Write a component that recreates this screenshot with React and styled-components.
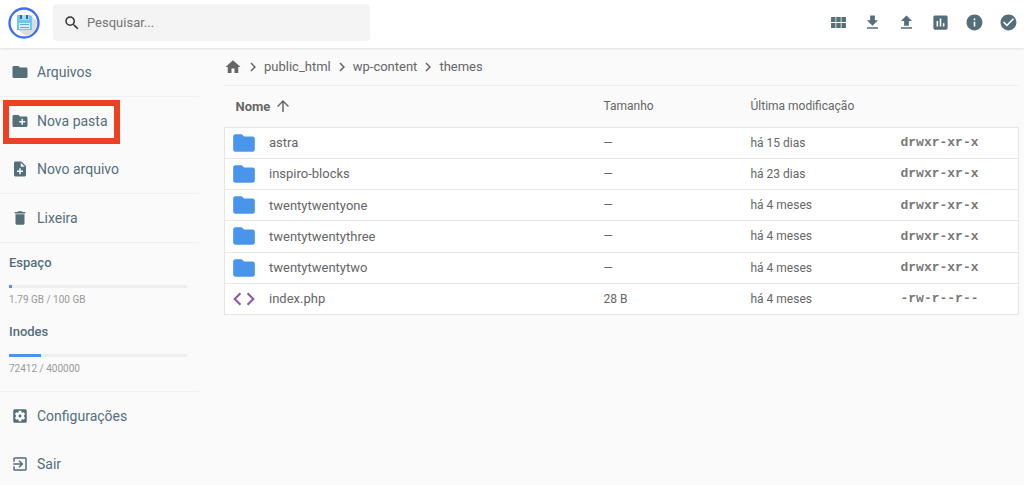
import React from 'react'
import styled, { createGlobalStyle } from 'styled-components'
import {
  MdArrowUpward,
  MdAssessment,
  MdCheckCircle,
  MdChevronRight,
  MdCode,
  MdDelete,
  MdExitToApp,
  MdFolder,
  MdInfo,
  MdNoteAdd,
  MdSearch,
  MdSettingsApplications,
} from 'react-icons/md'

const files = [
  { name: 'astra', size: '—', modified: 'há 15 dias', mode: 'drwxr-xr-x', folder: true },
  { name: 'inspiro-blocks', size: '—', modified: 'há 23 dias', mode: 'drwxr-xr-x', folder: true },
  { name: 'twentytwentyone', size: '—', modified: 'há 4 meses', mode: 'drwxr-xr-x', folder: true },
  { name: 'twentytwentythree', size: '—', modified: 'há 4 meses', mode: 'drwxr-xr-x', folder: true },
  { name: 'twentytwentytwo', size: '—', modified: 'há 4 meses', mode: 'drwxr-xr-x', folder: true },
  { name: 'index.php', size: '28 B', modified: 'há 4 meses', mode: '-rw-r--r--', folder: false },
]

const path = ['public_html', 'wp-content', 'themes']

const Glyph = ({ d }) => (
  <svg viewBox="0 0 24 24" width="1em" height="1em" fill="currentColor" aria-hidden="true">
    <path d={d} />
  </svg>
)

const HomeIcon = () => <Glyph d="M10 20v-6h4v6h5v-8h3L12 3 2 12h3v8z" />
const GridIcon = () => (
  <Glyph d="M2.6 5h5.6v6.5H2.6zM9.2 5h5.6v6.5H9.2zM15.8 5h5.6v6.5h-5.6zM2.6 12.5h5.6V19H2.6zM9.2 12.5h5.6V19H9.2zM15.8 12.5h5.6V19h-5.6z" />
)
const DownloadIcon = () => <Glyph d="M19 9h-4V3H9v6H5l7 7 7-7zM5 18v2h14v-2H5z" />
const UploadIcon = () => <Glyph d="M9 16h6v-6h4l-7-7-7 7h4zm-4 2h14v2H5z" />
const NewFolderIcon = () => (
  <Glyph d="M20 6h-8l-2-2H4c-1.11 0-1.99.89-1.99 2L2 18c0 1.11.89 2 2 2h16c1.11 0 2-.89 2-2V8c0-1.11-.89-2-2-2zm-1 8h-3v3h-2v-3h-3v-2h3V9h2v3h3v2z" />
)

const Logo = () => (
  <svg viewBox="0 0 32 32" width="32" height="32" aria-hidden="true">
    <circle cx="16" cy="16" r="14" fill="#fff" />
    <path d="M23 8l6 7a14 14 0 0 1-11 14l-8-6z" fill="#dcdcdc" />
    <path d="M9 8h13l2 2v13H9z" fill="#6cc5f8" />
    <path d="M12 8h9v5h-9z" fill="#a4dcfb" />
    <path d="M12 8h2v4h-2zM18 8h2v4h-2z" fill="#35688c" />
    <path d="M11 16h11v6H11z" fill="#d9f1fe" />
    <path d="M12 17.5h9M12 20.5h9" stroke="#58aee4" />
    <circle cx="16" cy="16" r="14.5" fill="none" stroke="#416ff2" strokeWidth="2.4" />
  </svg>
)

const App = () => {
  return (
    <Page>
      <GlobalStyle />
      <Header>
        <Brand href="#" aria-label="Início">
          <Logo />
        </Brand>
        <SearchBox>
          <MdSearch />
          <SearchInput type="text" placeholder="Pesquisar..." aria-label="Pesquisar" />
        </SearchBox>
        <Tools>
          <ToolButton aria-label="Visualização"><GridIcon /></ToolButton>
          <ToolButton aria-label="Baixar"><DownloadIcon /></ToolButton>
          <ToolButton aria-label="Enviar"><UploadIcon /></ToolButton>
          <ToolButton aria-label="Estatísticas"><MdAssessment /></ToolButton>
          <ToolButton aria-label="Informações"><MdInfo /></ToolButton>
          <ToolButton aria-label="Selecionar tudo"><MdCheckCircle /></ToolButton>
        </Tools>
      </Header>
      <Body>
        <Sidebar>
          <Group>
            <NavItem><MdFolder />Arquivos</NavItem>
          </Group>
          <Group>
            <NavItem $marked><NewFolderIcon />Nova pasta</NavItem>
            <NavItem><MdNoteAdd />Novo arquivo</NavItem>
          </Group>
          <Group>
            <NavItem><MdDelete />Lixeira</NavItem>
          </Group>
          <UsageGroup>
            <Usage title="Espaço" used={1.79} total={100} label="1.79 GB / 100 GB" />
            <Usage title="Inodes" used={72412} total={400000} label="72412 / 400000" />
          </UsageGroup>
          <NavItem><MdSettingsApplications />Configurações</NavItem>
          <NavItem><MdExitToApp />Sair</NavItem>
        </Sidebar>
        <Main>
          <Breadcrumbs>
            <HomeLink href="#" aria-label="Raiz"><HomeIcon /></HomeLink>
            {path.map((part) => (
              <React.Fragment key={part}>
                <MdChevronRight />
                <Crumb href="#">{part}</Crumb>
              </React.Fragment>
            ))}
          </Breadcrumbs>
          <FileTable>
            <colgroup>
              <col />
              <NarrowCol />
              <DateCol />
              <ModeCol />
            </colgroup>
            <thead>
              <tr>
                <HeadCell>
                  <SortButton>Nome<MdArrowUpward /></SortButton>
                </HeadCell>
                <HeadCell>Tamanho</HeadCell>
                <HeadCell>Última modificação</HeadCell>
                <HeadCell aria-label="Permissões" />
              </tr>
            </thead>
            <tbody>
              {files.map((file) => (
                <FileRow key={file.name}>
                  <Cell>
                    <FileName $folder={file.folder}>
                      {file.folder ? <MdFolder /> : <MdCode />}
                      {file.name}
                    </FileName>
                  </Cell>
                  <Cell $small>{file.size}</Cell>
                  <Cell $small>{file.modified}</Cell>
                  <ModeCell>{file.mode}</ModeCell>
                </FileRow>
              ))}
            </tbody>
          </FileTable>
        </Main>
      </Body>
    </Page>
  )
}

const Usage = ({ title, used, total, label }) => (
  <UsageBlock>
    <UsageTitle>{title}</UsageTitle>
    <Track>
      <Fill style={{ width: `${(used / total) * 100}%` }} />
    </Track>
    <UsageLabel>{label}</UsageLabel>
  </UsageBlock>
)

export default App

const GlobalStyle = createGlobalStyle`
*, *::after {
  box-sizing: border-box;
}
body {
  margin: 0;
  background: #fafafa;
  font-family: Roboto, "Liberation Sans", sans-serif;
  font-size: 13px;
  color: #666;
}
button, input {
  font: inherit;
  color: inherit;
  border: 0;
  padding: 0;
  background: none;
}
a {
  color: inherit;
  text-decoration: none;
}
svg {
  flex-shrink: 0;
}
`
const Page = styled.div`
height: 100vh;
display: flex;
flex-direction: column;
`
const Header = styled.header`
height: 48px;
flex-shrink: 0;
display: flex;
align-items: center;
padding: 0 6px 3px 8px;
background: #fff;
box-shadow: 0 0 3px rgba(0,0,0,0.2);
z-index: 1;
`
const Brand = styled.a`
display: flex;
margin-right: 13px;
`
const SearchBox = styled.label`
display: flex;
align-items: center;
gap: 6px;
flex: 0 1 317px;
height: 37px;
padding-left: 10px;
border-radius: 4px;
background: #f4f4f4;
svg {
  font-size: 18px;
  color: #333;
}
`
const SearchInput = styled.input`
flex: 1;
min-width: 0;
outline: none;
font-size: 13px;
&::placeholder {
  color: #757575;
}
`
const Tools = styled.div`
display: flex;
gap: 14px;
margin-left: auto;
color: #546e7a;
`
const ToolButton = styled.button`
display: flex;
align-items: center;
justify-content: center;
width: 20px;
height: 20px;
font-size: 19px;
cursor: pointer;
`
const Body = styled.div`
flex: 1;
min-height: 0;
display: flex;
`
const Sidebar = styled.nav`
width: 199px;
flex-shrink: 0;
overflow-y: auto;
scrollbar-width: none;
color: #546e7a;
`
const Group = styled.div`
border-bottom: 1px solid #f0f0f0;
`
const NavItem = styled.button`
position: relative;
display: flex;
align-items: center;
gap: 8px;
width: 100%;
height: 48px;
padding-left: 11px;
font-size: 14px;
cursor: pointer;
svg {
  font-size: 18px;
}
${({ $marked }) => $marked && `
&::after {
  content: '';
  position: absolute;
  left: 3px;
  top: 3px;
  width: 117px;
  height: 44px;
  border: 6px solid #ee4023;
}
`}
`
const UsageGroup = styled(Group)`
display: flex;
flex-direction: column;
gap: 17px;
padding: 12px 12px 15px 9px;
`
const UsageBlock = styled.section`
display: flex;
flex-direction: column;
`
const UsageTitle = styled.h2`
margin: 0 0 14px;
font-size: 13px;
font-weight: 500;
line-height: 16px;
`
const Track = styled.div`
height: 3px;
background: #eee;
`
const Fill = styled.div`
height: 100%;
background: #4a95ec;
`
const UsageLabel = styled.span`
margin-top: 4px;
font-size: 10px;
line-height: 15px;
color: #999;
`
const Main = styled.main`
flex: 1;
min-width: 0;
padding: 0 5px 0 25px;
`
const Breadcrumbs = styled.nav`
display: flex;
align-items: center;
gap: 2px;
height: 38px;
border-bottom: 1px solid #f0f0f0;
svg {
  font-size: 18px;
}
`
const HomeLink = styled.a`
display: flex;
`
const Crumb = styled.a`
font-size: 13px;
`
const FileTable = styled.table`
width: 100%;
height: 229px;
table-layout: fixed;
border-collapse: collapse;
`
const NarrowCol = styled.col`
width: 147px;
`
const DateCol = styled.col`
width: 150px;
`
const ModeCol = styled.col`
width: 118px;
`
const HeadCell = styled.th`
height: 41px;
padding: 0;
font-size: 12px;
font-weight: 400;
text-align: left;
`
const SortButton = styled.button`
display: flex;
align-items: center;
gap: 4px;
padding-left: 11px;
font-size: 13px;
font-weight: 700;
cursor: pointer;
svg {
  font-size: 18px;
}
`
const FileRow = styled.tr`
background: #fff;
border: 1px solid #e6e6e6;
`
const Cell = styled.td`
height: 31px;
padding: 0;
font-size: ${({ $small }) => ($small ? '12px' : '13px')};
`
const ModeCell = styled(Cell)`
font-family: "Liberation Mono", monospace;
font-size: 13px;
font-weight: 700;
color: #777;
`
const FileName = styled.div`
display: flex;
align-items: center;
gap: 12px;
padding-left: 6px;
svg {
  font-size: 26px;
  color: ${({ $folder }) => ($folder ? '#4a95ec' : '#8e5bb5')};
}
`
